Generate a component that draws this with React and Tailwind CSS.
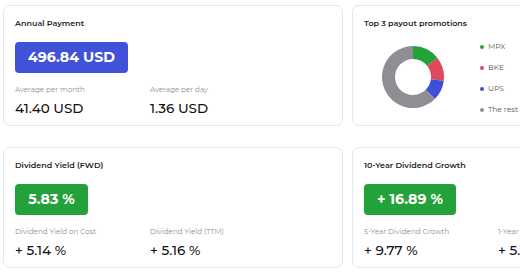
import React from 'react';

const FONT = "font-['Montserrat','DejaVu_Sans',sans-serif]";

const Card = ({ title, className = '', children }) => (
  <div className={`h-[121px] shrink-0 rounded-[7px] border border-[#dfe7ef] bg-white pl-[11px] pt-[11px] ${className}`}>
    <div className="text-[8px] font-semibold leading-[12px] text-[#222]">{title}</div>
    {children}
  </div>
);

const Stat = ({ label, value, width }) => (
  <div className={width}>
    <div className="text-[7.2px] leading-[10px] text-[#8a8f96]">{label}</div>
    <div className="mt-[4px] text-[13.5px] font-medium leading-[18px] text-[#111]">{value}</div>
  </div>
);

const Highlight = ({ color, width, children }) => (
  <div
    className={`mt-[13px] flex h-[31px] items-center justify-center rounded-[4px] text-[14.2px] font-bold text-white ${color} ${width}`}
  >
    {children}
  </div>
);

const Donut = () => {
  const cx = 31;
  const cy = 31;
  const rOut = 31;
  const rIn = 18;
  const segs = [
    { from: 0, to: 52, color: '#22a33a' },
    { from: 52, to: 97, color: '#e0485b' },
    { from: 97, to: 135, color: '#3f4fd6' },
    { from: 135, to: 360, color: '#8e8e93' },
  ];
  const pt = (r, a) => {
    const rad = ((a - 90) * Math.PI) / 180;
    return [cx + r * Math.cos(rad), cy + r * Math.sin(rad)];
  };
  return (
    <svg width="62" height="62" viewBox="0 0 62 62">
      {segs.map((s) => {
        const large = s.to - s.from > 180 ? 1 : 0;
        const [x1, y1] = pt(rOut, s.from);
        const [x2, y2] = pt(rOut, s.to);
        const [x3, y3] = pt(rIn, s.to);
        const [x4, y4] = pt(rIn, s.from);
        const d = `M${x1},${y1} A${rOut},${rOut} 0 ${large} 1 ${x2},${y2} L${x3},${y3} A${rIn},${rIn} 0 ${large} 0 ${x4},${y4} Z`;
        return <path key={s.color} d={d} fill={s.color} />;
      })}
    </svg>
  );
};

const legend = [
  { name: 'MPX', color: 'bg-[#22a33a]' },
  { name: 'BKE', color: 'bg-[#e0485b]' },
  { name: 'UPS', color: 'bg-[#3f4fd6]' },
  { name: 'The rest', color: 'bg-[#8e8e93]' },
];

export default function App() {
  return (
    <div className={`h-[272px] w-[520px] overflow-hidden bg-white pl-[3px] pt-[5px] ${FONT}`}>
      <div className="flex flex-col gap-[21px]">
        <div className="flex gap-[9px]">
          <Card title="Annual Payment" className="w-[340px]">
            <Highlight color="bg-[#3f52d8]" width="w-[113px]">496.84 USD</Highlight>
            <div className="mt-[12px] flex">
              <Stat label="Average per month" value="41.40 USD" width="w-[135px]" />
              <Stat label="Average per day" value="1.36 USD" />
            </div>
          </Card>
          <Card title="Top 3 payout promotions" className="w-[340px]">
            <div className="flex">
              <div className="ml-[18px] mt-[17px]">
                <Donut />
              </div>
              <div className="ml-[36px] mt-[12px] flex flex-col gap-[10px]">
                {legend.map((l) => (
                  <div key={l.name} className="flex h-[11px] items-center gap-[4px] text-[7.5px] text-[#555]">
                    <span className={`h-[4px] w-[4px] rounded-full ${l.color}`} />
                    <span>{l.name}</span>
                  </div>
                ))}
              </div>
            </div>
          </Card>
        </div>
        <div className="flex gap-[9px]">
          <Card title="Dividend Yield (FWD)" className="w-[340px]">
            <Highlight color="bg-[#23a23a]" width="w-[73px]">5.83 %</Highlight>
            <div className="mt-[12px] flex">
              <Stat label="Dividend Yield on Cost" value="+ 5.14 %" width="w-[135px]" />
              <Stat label="Dividend Yield (TTM)" value="+ 5.16 %" />
            </div>
          </Card>
          <Card title="10-Year Dividend Growth" className="w-[340px]">
            <Highlight color="bg-[#23a23a]" width="w-[92px]">+ 16.89 %</Highlight>
            <div className="mt-[12px] flex">
              <Stat label="5-Year Dividend Growth" value="+ 9.77 %" width="w-[134px]" />
              <Stat label="1-Year Dividend Growth" value="+ 5.18 %" />
            </div>
          </Card>
        </div>
      </div>
    </div>
  );
}
